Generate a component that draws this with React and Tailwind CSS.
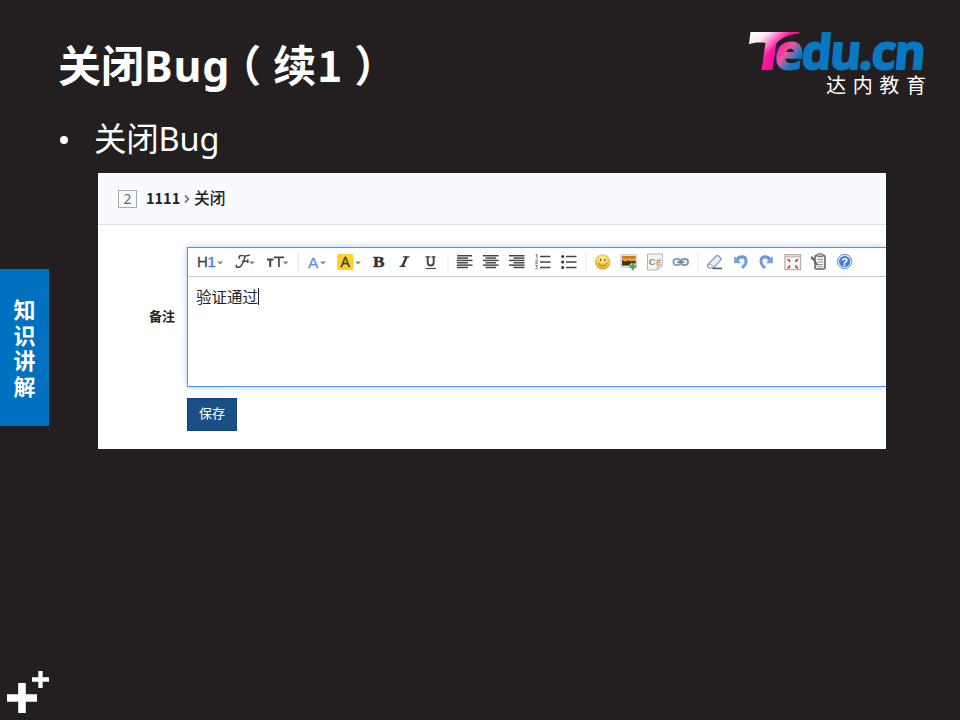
import React from "react";

const INK = "#444";

function Cell({ w = 26, children }) {
  return (
    <svg width={w} height="28" viewBox={`0 0 ${w} 28`} className="block shrink-0 font-['Liberation_Sans',sans-serif]">
      {children}
    </svg>
  );
}

function Caret({ x }) {
  return <path d={`M${x} 13.4h5.8l-2.9 3.200z`} fill="#858585" />;
}

function Separator({ w = 8, x = 4 }) {
  return (
    <Cell w={w}>
      <path d={`M${x} 5.5v17`} stroke="#d0d0d0" strokeDasharray="1 1" />
    </Cell>
  );
}

function Lines({ rows }) {
  return (
    <Cell>
      {rows.map(([x, w], i) => (
        <rect key={i} x={x} y={7 + i * 2.35} width={w} height="1.45" fill={INK} />
      ))}
    </Cell>
  );
}

function UndoShape() {
  return (
    <>
      <path d="M9 11.5C12 7.5 17.8 8 18 12.8c.1 3-1.5 5-4 7" fill="none" stroke="#6a94d8" strokeWidth="3" />
      <path d="M10.5 12.8C13 9.5 16.8 9.4 17 13c0 2-1 4-2.500 5.500" fill="none" stroke="#9bbdf0" strokeWidth="1" />
      <path d="M6.200 8v7.200h7z" fill="#769fe0" />
    </>
  );
}

function Toolbar() {
  return (
    <div className="flex h-[29px] border-b border-[#c9c9c9] bg-white pl-[8px]">
      <Cell w={38}>
        <text x="1" y="19" fontSize="15" fill="#444" stroke="#444" strokeWidth=".3">H</text>
        <text x="11.500" y="19" fontSize="15" fill="#4a86e8" stroke="#4a86e8" strokeWidth=".5">1</text>
        <Caret x={21.300} />
      </Cell>
      <Cell w={32}>
        <path d="M5.500 10.500c-1.500-2.500 1-3.400 3.500-2.900 2.500.4 4.500.4 6.500-.5M11.500 8C9.500 11 9.500 18.700 4.500 19.300c-2 .2-3-1.200-2-2M8.500 13.300h5.200M13.800 11.800v2.700" fill="none" stroke="#444" strokeWidth="1.400" strokeLinecap="round" />
        <Caret x={15} />
      </Cell>
      <Cell w={27}>
        <path d="M1 11.500h6.500M4.200 11.500V19" stroke="#444" strokeWidth="2" />
        <path d="M7.800 9.300H18M12.900 9.300V19" stroke="#444" strokeWidth="1.700" />
        <Caret x={16.700} />
      </Cell>
      <Separator w={15} x={5.500} />
      <Cell w={29}>
        <text x="0" y="19.500" fontSize="15.500" fill="#568ff0" stroke="#568ff0" strokeWidth=".3">A</text>
        <Caret x={12} />
      </Cell>
      <Cell w={29}>
        <rect x=".2" y="6" width="16.300" height="16" rx="2" fill="#ffd02e" />
        <text x="3.500" y="19" fontSize="14" fill="#494322" stroke="#494322" strokeWidth=".4">A</text>
        <Caret x={18.200} />
      </Cell>
      <Cell>
        <text x="7" y="18.700" fontSize="14" fontWeight="bold" textLength="11.500" lengthAdjust="spacingAndGlyphs" fill="#333" stroke="#333" strokeWidth=".4" className="font-['Liberation_Serif',serif]">B</text>
      </Cell>
      <Cell>
        <path d="M11 8.800h6.500M7.500 18.400h6" stroke="#333" strokeWidth="1.200" />
        <path d="M14.700 8.800l-4.400 9.600" stroke="#333" strokeWidth="2.300" />
      </Cell>
      <Cell>
        <path d="M7.500 8.800h4.800M13.500 8.800h4" stroke="#444" strokeWidth="1.200" />
        <path d="M9.700 8.800v5.400c0 4.300 6 4.300 6 0V8.800" fill="none" stroke="#444" strokeWidth="1.900" />
        <path d="M7.500 20.500h10.500" stroke="#444" strokeWidth="1.100" />
      </Cell>
      <Separator />
      <Lines rows={[[5, 15], [5, 11], [5, 15.500], [5, 11], [5, 15.500], [5, 11]]} />
      <Lines rows={[[5, 15.500], [7.500, 10.500], [5, 15.500], [7.500, 10.500], [5, 15.500], [7.500, 10.500]]} />
      <Lines rows={[[5, 15.500], [9.500, 11], [5, 15.500], [9.500, 11], [5, 15.500], [9.500, 11]]} />
      <Cell>
        <path d="M10 8.500h10.500M10 14h10.500M10 19.500h10.500" stroke={INK} strokeWidth="1.300" />
        <path d="M5.700 7.200l1.300-.7v4M5.300 12.300c2-1.200 2.700.2 1.500 1.300l-1.300 1.500h2.300M5.300 17.300h2l-1 1.300c2 .2 1.500 2.800-1 2.200" fill="none" stroke="#555" strokeWidth=".9" />
      </Cell>
      <Cell>
        <path d="M10 8.500h10.500M10 14h10.500M10 19.500h10.500" stroke={INK} strokeWidth="1.300" />
        <g fill="#333"><circle cx="6.700" cy="8.500" r="1.500" /><circle cx="6.700" cy="14" r="1.500" /><circle cx="6.700" cy="19.500" r="1.500" /></g>
      </Cell>
      <Separator />
      <Cell>
        <defs>
          <radialGradient id="face" cx=".5" cy=".3" r=".7"><stop offset="0" stopColor="#fff3a0" /><stop offset=".6" stopColor="#fccd3f" /><stop offset="1" stopColor="#e59b22" /></radialGradient>
        </defs>
        <circle cx="12.700" cy="14" r="7.300" fill="url(#face)" stroke="#e3ab3c" strokeWidth=".7" />
        <path d="M10.600 10.800v2.200M14.800 10.800v2.200" stroke="#795619" strokeWidth="1.200" />
        <path d="M8.500 15c1.500 3.500 7 3.500 8.500 0" fill="none" stroke="#9c6c1c" strokeWidth="1" />
      </Cell>
      <Cell>
        <rect x="4.600" y="6.500" width="16.400" height="13" rx="1" fill="#e4e4e4" stroke="#c9c9c9" strokeWidth=".7" />
        <rect x="6" y="8" width="13.500" height="9.500" fill="#eba326" />
        <path d="M6 8h13.500v2.500H6z" fill="#c67b1e" />
        <path d="M6 12l3 1.500 3-1 3.500 1 4-1v5H6z" fill="#3c3524" />
        <path d="M16.800 15v7M13.300 18.500h7" stroke="#eef8ea" strokeWidth="3.800" />
        <path d="M16.800 15v7M13.300 18.500h7" stroke="#48ad3c" strokeWidth="2.300" />
      </Cell>
      <Cell>
        <path d="M5.500 6h14.800v11l-5 5H5.500z" fill="#f5f5f5" stroke="#b5b5b5" />
        <path d="M20.300 17h-5v5z" fill="#ddd" stroke="#aaa" strokeWidth=".7" />
        <text x="6.800" y="17" fontSize="9.500" fontWeight="bold" textLength="12.500" lengthAdjust="spacingAndGlyphs" fill="#a88758">C#</text>
      </Cell>
      <Cell>
        <g fill="none" strokeWidth="2"><rect x="5.400" y="11" width="7" height="6" rx="3" stroke="#8da2c1" /><rect x="13" y="11" width="7" height="6" rx="3" stroke="#8198bb" /></g>
        <path d="M9 14h7.500" stroke="#6481ac" strokeWidth="1.600" />
      </Cell>
      <Separator />
      <Cell>
        <path d="M5.500 17l8-8.500c1.200-1.300 2.700-1 4 .2 1.500 1.300 2 2.400.9 3.700L11.500 20H8c-2-.5-3-1.500-2.500-3z" fill="#e8eff8" stroke="#8497b2" strokeWidth="1.200" />
        <path d="M6 16.500c2.500-.5 4.500.8 5.500 3" fill="none" stroke="#8ea2bf" />
        <path d="M10.500 20.400h9.500" stroke="#555" strokeWidth="1.500" />
      </Cell>
      <Cell><UndoShape /></Cell>
      <Cell><g transform="translate(25 0) scale(-1 1)"><UndoShape /></g></Cell>
      <Cell>
        <rect x="5" y="6.700" width="15.500" height="14.800" fill="#fafafa" stroke="#b9b2b0" strokeWidth="1.400" />
        <path d="M5 8.700h15.500" stroke="#c8bfbd" strokeWidth="1.500" />
        <path d="M7.200 11.500h3v3zM18.300 11.500h-3v3zM7.200 20h3v-3zM18.300 20h-3v-3z" fill="#d6494b" />
        <path d="M7.500 11l2.500 3M18 11l-2.500 3M7.500 20.500l2.500-3M18 20.500l-2.500-3" stroke="#cf4548" strokeWidth="1.200" />
      </Cell>
      <Cell>
        <rect x="9" y="7.500" width="10" height="13.500" rx="1.500" fill="#f2f2ee" stroke="#666" strokeWidth="1.600" />
        <rect x="11.200" y="5.700" width="5.800" height="3" rx="1" fill="#bbb" stroke="#666" strokeWidth=".9" />
        <path d="M11.500 11.500h5.500M11.500 14h5.500M11.500 16.500h5.500M11.500 18.700h5" stroke="#888" strokeWidth=".9" />
        <path d="M5.300 8.500l6 8.500M5 10.500h3.500" stroke="#65655c" strokeWidth="1.700" />
      </Cell>
      <Cell>
        <circle cx="12.700" cy="13.500" r="7.200" fill="#dce8fb" stroke="#6c94d8" />
        <circle cx="12.700" cy="13.500" r="5.600" fill="#457bd6" />
        <text x="9.300" y="17.500" fontSize="11" fontWeight="bold" fill="#fff">?</text>
      </Cell>
    </div>
  );
}

function Logo() {
  return (
    <svg width="190" height="74" viewBox="740 26 190 74" className="block overflow-visible font-['Open_Sans','Noto_Sans_CJK_SC',sans-serif]">
      <defs>
        <linearGradient id="tee" gradientUnits="userSpaceOnUse" x1="755" y1="32" x2="781" y2="60">
          <stop offset="0" stopColor="#fff" /><stop offset=".25" stopColor="#ffe3f2" /><stop offset=".65" stopColor="#ff18a0" /><stop offset="1" stopColor="#f20d96" />
        </linearGradient>
        <linearGradient id="blend" gradientUnits="userSpaceOnUse" x1="3" y1="-18" x2="20" y2="-6">
          <stop offset="0" stopColor="#ff2a9e" /><stop offset=".35" stopColor="#e7589f" /><stop offset=".75" stopColor="#4a74b8" /><stop offset="1" stopColor="#0878c2" />
        </linearGradient>
      </defs>
      <path d="M750.500 32H800l-1.200 1.400c-5 .3-12.500 1.500-19.500 7.300-2 1.500-3 2.500-3.500 5.500L772.500 70h-11l4-27c-6-1-12-.5-16.500 1.200z" fill="url(#tee)" />
      <text transform="translate(774 69) skewX(-5)" fontSize="47.500" fontWeight="700" textLength="150.500" lengthAdjust="spacing" fill="url(#blend)" stroke="url(#blend)" strokeWidth="2">edu.cn</text>
      <text x="826" y="92.500" fontSize="20" textLength="100" fill="#fff">达内教育</text>
    </svg>
  );
}

function SideRail() {
  return (
    <aside className="flex w-[49px] shrink-0 flex-col justify-between pt-[269px]">
      <div className="flex h-[157px] flex-col items-center bg-[#0070c0] pt-[27px] font-['Noto_Sans_CJK_SC',sans-serif] text-[22px] font-bold leading-[25.500px] text-white">
        {["知", "识", "讲", "解"].map((c) => <span key={c}>{c}</span>)}
      </div>
      <svg width="49" height="60" viewBox="0 0 49 60" className="block">
        <path d="M7 38h30M22 23v30" stroke="#fff" strokeWidth="7.600" />
        <path d="M32 19.500h17M40.500 11v17" stroke="#fff" strokeWidth="4.300" />
      </svg>
    </aside>
  );
}

function BugPanel() {
  return (
    <section className="ml-[49px] mt-[7px] h-[276px] w-[788px] overflow-hidden bg-white font-['Noto_Sans','Noto_Sans_CJK_SC',sans-serif] text-[#222]">
      <header className="flex h-[52px] items-center border-b border-[#e0e1e4] bg-[#f8faff] pl-[20px]">
        <span className="flex h-[18px] w-[19px] items-center justify-center border border-[#aaa] text-[14px] leading-none text-[#666]">2</span>
        <span className="ml-[9px] w-[34px] pb-[1px] font-['Noto_Sans_CJK_SC',sans-serif] text-[14.500px] font-bold leading-[20px]">1111</span>
        <svg width="14" height="12" viewBox="0 0 14 12" className="block"><path d="M5 2.500l3.500 3.500L5 9.500" fill="none" stroke="#666" strokeWidth="1.500" /></svg>
        <span className="pb-[2px] font-['Noto_Sans_CJK_SC',sans-serif] text-[15.700px] font-medium leading-[22px]">关闭</span>
      </header>
      <div className="mt-[22px] flex">
        <label className="w-[89px] shrink-0 pr-[12px] pt-[59px] text-right font-['Noto_Sans_CJK_SC',sans-serif] text-[13px] font-bold leading-[20px]">备注</label>
        <div className="h-[140px] flex-1 border border-r-0 border-[#5094f4] shadow-[0_0_6px_rgba(60,130,240,0.45)]">
          <Toolbar />
          <div className="flex items-center pl-[8px] pt-[9px] font-['Noto_Sans_CJK_SC',sans-serif] text-[15.500px] leading-[20px] text-[#222]">
            验证通过<span className="h-[17px] w-px bg-[#222]" />
          </div>
        </div>
      </div>
      <button className="ml-[89px] mt-[11px] block h-[33px] w-[50px] border border-[#15427a] bg-[#1a4f85] pb-[4px] font-['Noto_Sans_CJK_SC',sans-serif] text-[13px] leading-none text-white">保存</button>
    </section>
  );
}

export default function App() {
  return (
    <div className="flex h-[720px] w-[960px] overflow-hidden bg-[#231f20] text-white">
      <SideRail />
      <main className="flex-1 font-['Noto_Sans','Noto_Sans_CJK_SC',sans-serif]">
        <div className="flex h-[116px] justify-between pr-[30px] pt-[26px]">
          <h1 className="-mt-[3px] ml-[9px] flex items-baseline self-start whitespace-nowrap text-[43px] font-bold leading-[80px]">
            <span>关闭</span>
            <span className="tracking-[0.8px]">Bug</span>
            <span className="-ml-[12px] mr-[12px]">（</span>
            <span>续</span>
            <span className="w-[27px] text-center font-['Noto_Sans_CJK_SC',sans-serif]">1</span>
            <span className="ml-[11px]">）</span>
          </h1>
          <Logo />
        </div>
        <div className="flex h-[50px] items-center">
          <span className="-mt-[3px] ml-[11px] h-[8px] w-[8px] rounded-full bg-white" />
          <span className="-mt-[4px] ml-[26px] text-[32.500px] font-normal leading-[50px] tracking-[-0.200px]">关闭Bug</span>
        </div>
        <BugPanel />
      </main>
    </div>
  );
}
